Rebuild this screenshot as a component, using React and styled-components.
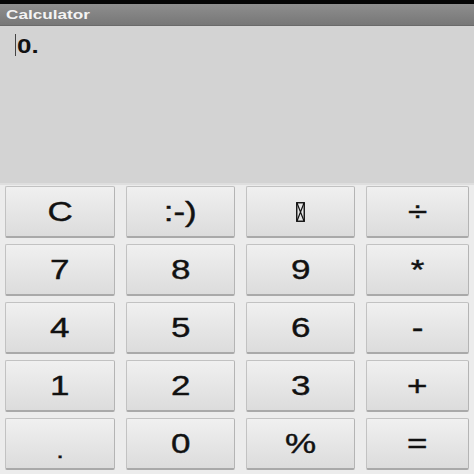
import React from "react"
import styled, { createGlobalStyle } from "styled-components"

const GlobalStyle = createGlobalStyle`
  html, body {
    margin: 0;
    padding: 0;
    background: #ececec;
  }
  body {
    font-family: "Liberation Sans", Arial, sans-serif;
  }
`

const keys = ["C", ":-)", "box", "÷", "7", "8", "9", "*", "4", "5", "6", "-", "1", "2", "3", "+", ".", "0", "%", "="]

const MissingGlyph = () => (
  <svg width="9" height="20" viewBox="0 0 9 20">
    <rect x="0.75" y="0.75" width="7.5" height="18.5" fill="none" stroke="#111" strokeWidth="1.4" />
    <path d="M1 1 L8 19 M8 1 L1 19" stroke="#111" strokeWidth="1.2" fill="none" />
  </svg>
)

const App = () => {
  return (
    <Screen>
      <GlobalStyle />
      <StatusBar />
      <TitleBar>
        <Title>Calculator</Title>
      </TitleBar>
      <Display>
        <Cursor />
        <Value>0.</Value>
      </Display>
      <Keypad>
        {keys.map((k) => (
          <Key key={k} $small={k === "."}>
            {k === "box" ? <MissingGlyph /> : <Label>{k}</Label>}
          </Key>
        ))}
      </Keypad>
    </Screen>
  )
}

const Screen = styled.div`
  width: 474px;
  height: 474px;
  overflow: hidden;
  background: #ececec;
`

const StatusBar = styled.div`
  height: 4px;
  background: #050505;
`

const TitleBar = styled.div`
  height: 21px;
  display: flex;
  align-items: center;
  padding-left: 6px;
  background: linear-gradient(#8e8e8e, #777777);
  border-bottom: 1px solid #6a6a6a;
`

const Title = styled.span`
  color: #f4f4f4;
  font-weight: bold;
  font-size: 13px;
  display: inline-block;
  transform: scaleX(1.32);
  transform-origin: left center;
`

const Display = styled.div`
  height: 159px;
  background: #d3d3d3;
  display: flex;
  align-items: flex-start;
  padding: 7px 0 0 15px;
  box-sizing: border-box;
  border-bottom: 2px solid #dedede;
`

const Cursor = styled.div`
  width: 1px;
  height: 22px;
  background: #444;
  margin-top: 1px;
`

const Value = styled.span`
  font-size: 20px;
  font-weight: bold;
  color: #111;
  margin-left: 1px;
  margin-top: 2px;
  display: inline-block;
  transform: scaleX(1.3);
  transform-origin: left center;
`

const Keypad = styled.div`
  display: grid;
  grid-template-columns: 110px 109px 109px 103px;
  grid-auto-rows: 52px;
  column-gap: 11px;
  row-gap: 6px;
  padding: 1px 0 0 5px;
`

const Key = styled.div`
  display: flex;
  align-items: center;
  justify-content: center;
  box-sizing: border-box;
  background: linear-gradient(#f0f0f0, #dcdcdc);
  border: 1px solid #c2c2c2;
  border-bottom: 2px solid #a9a9a9;
  border-right-color: #b4b4b4;
  border-radius: 2px;
  color: #111;
  font-size: ${(p) => (p.$small ? "22px" : "28px")};
  padding-top: ${(p) => (p.$small ? "14px" : "0")};
`

const Label = styled.span`
  display: inline-block;
  transform: scaleX(1.25);
  -webkit-text-stroke: 0.4px #111;
`

export default App
